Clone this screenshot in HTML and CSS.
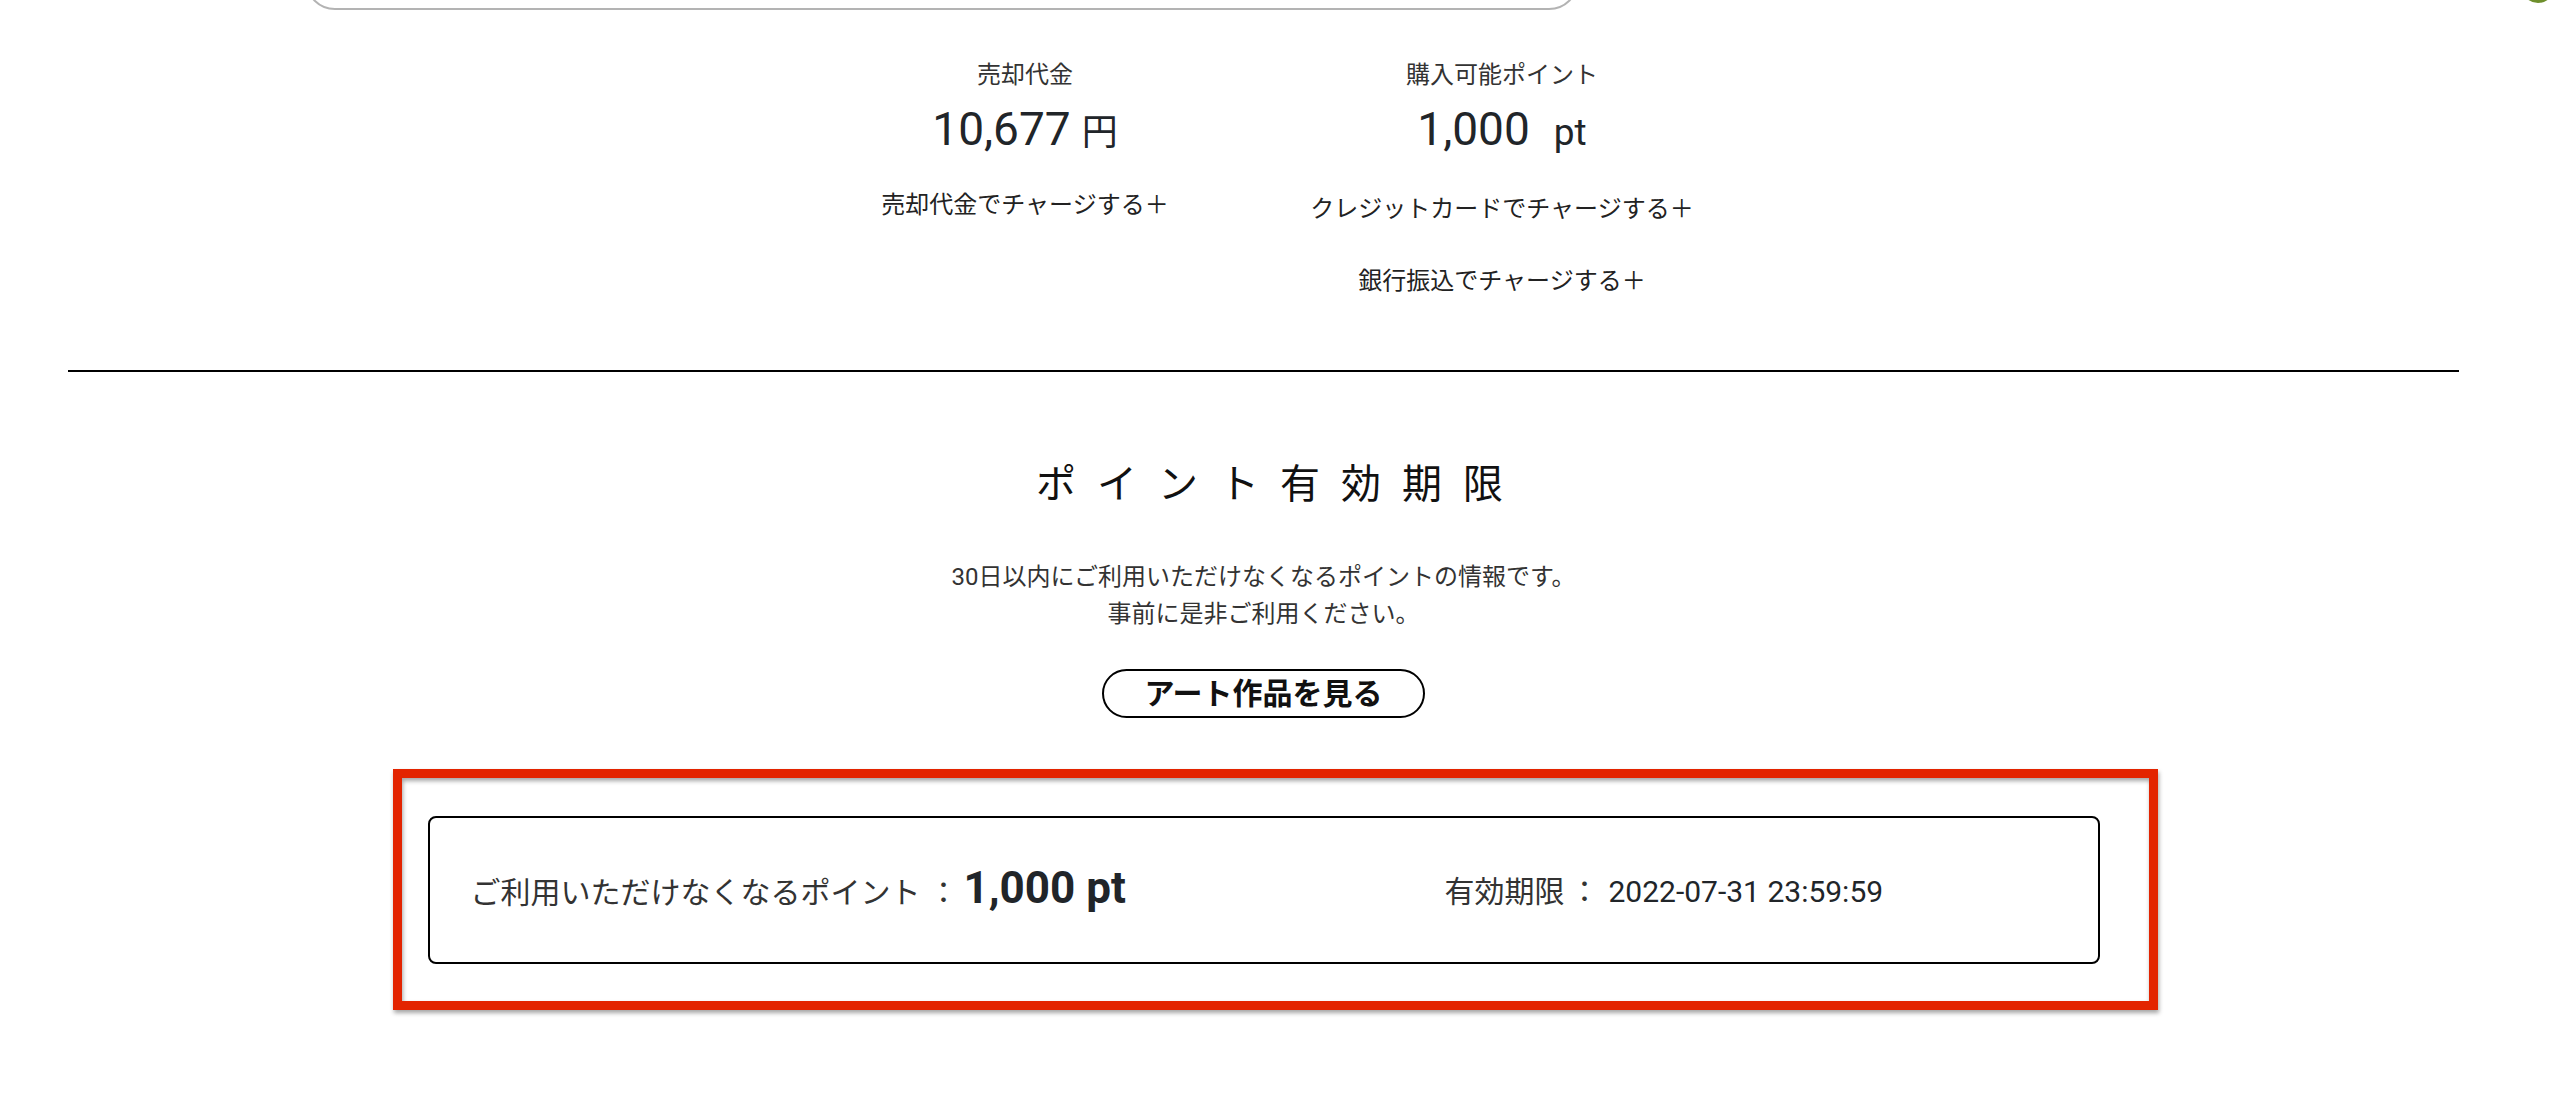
FILE: index.html
```html
<!DOCTYPE html>
<html lang="ja">
<head>
<meta charset="utf-8">
<title>ポイント有効期限</title>
<link rel="stylesheet" href="styles.css">
</head>
<body>
  <div class="avatar"></div>
  <div class="search"></div>
  <main class="page">
    <section class="balances">
      <div class="col">
        <div class="label">売却代金</div>
        <div class="amount">10,677<span class="yen">円</span></div>
        <a class="charge">売却代金でチャージする＋</a>
      </div>
      <div class="col">
        <div class="label">購入可能ポイント</div>
        <div class="amount">1,000<span class="pt">pt</span></div>
        <a class="charge">クレジットカードでチャージする＋</a>
        <a class="charge charge-next">銀行振込でチャージする＋</a>
      </div>
    </section>
    <hr class="divider">
    <section class="expiry">
      <h2 class="title">ポイント有効期限</h2>
      <p class="desc">30日以内にご利用いただけなくなるポイントの情報です。<br>事前に是非ご利用ください。</p>
      <a class="btn">アート作品を見る</a>
      <div class="card">
        <div class="cell">
          <span class="key">ご利用いただけなくなるポイント</span><span class="colon">：</span><span class="pts">1,000 pt</span>
        </div>
        <div class="cell">
          <span class="key">有効期限</span><span class="colon colon-r">：</span><span class="date">2022-07-31 23:59:59</span>
        </div>
      </div>
    </section>
  </main>
  <div class="highlight"></div>
</body>
</html>
```
FILE: styles.css
```css
html, body {
  margin: 0;
  padding: 0;
  background: #fff;
}
body {
  font-family: Roboto, "Noto Sans CJK JP", sans-serif;
  color: #212529;
  overflow: hidden;
}
a {
  text-decoration: none;
  color: inherit;
}

.avatar {
  position: absolute;
  top: -28px;
  left: 2522px;
  width: 32px;
  height: 31px;
  border-radius: 50%;
  background: #6e8f2c;
}

.search {
  box-sizing: border-box;
  margin: -60px 0 0 305px;
  width: 1274px;
  height: 70px;
  border: 2px solid #b3b3b3;
  border-radius: 30px;
}

.page {
  margin-left: 68px;
  width: 2391px;
}

.balances {
  display: flex;
  justify-content: center;
  margin-top: 47px;
}
.col {
  width: 477px;
  display: flex;
  flex-direction: column;
  align-items: center;
  text-align: center;
}
.label {
  font-size: 24px;
  line-height: 36px;
  color: #333;
}
.amount {
  margin-top: 6px;
  font-size: 46px;
  line-height: 60px;
  color: #212529;
}
.yen {
  font-family: "Noto Sans CJK JP", sans-serif;
  font-size: 36px;
  margin-left: 11px;
}
.pt {
  font-size: 37px;
  margin-left: 24px;
}
.charge {
  display: block;
  margin-top: 28px;
  font-size: 24px;
  line-height: 36px;
  color: #222;
}
.charge-next {
  margin-top: 36px;
}

.divider {
  margin: 71px 0 0;
  border: 0;
  height: 2px;
  background: #000;
}

.expiry {
  display: flex;
  flex-direction: column;
  align-items: center;
}
.title {
  margin: 85px 0 0;
  padding-left: 33px;
  font-size: 40px;
  line-height: 56px;
  letter-spacing: 21px;
  font-weight: 400;
  color: #111;
}
.desc {
  margin: 46px 0 0;
  font-size: 24px;
  line-height: 37px;
  text-align: center;
  color: #333;
}
.btn {
  box-sizing: border-box;
  margin-top: 36px;
  width: 323px;
  height: 49px;
  border: 2px solid #000;
  border-radius: 25px;
  font-size: 30px;
  font-weight: 700;
  line-height: 45px;
  text-align: center;
  color: #111;
}

.card {
  box-sizing: border-box;
  margin-top: 98px;
  width: 1672px;
  height: 148px;
  border: 2px solid #000;
  border-radius: 8px;
  padding: 0 41px;
  display: grid;
  grid-template-columns: 974px 1fr;
  align-items: center;
}
.cell {
  display: flex;
  align-items: baseline;
  line-height: 48px;
}
.key {
  font-size: 30px;
  color: #333;
}
.colon {
  font-family: "Noto Sans CJK JP", sans-serif;
  font-size: 30px;
  color: #333;
  margin-left: 8px;
}
.colon-r {
  margin-left: 5px;
}
.pts {
  margin-left: 5px;
  font-size: 44px;
  font-weight: 700;
  color: #212529;
}
.date {
  margin-left: 9px;
  font-size: 30px;
  color: #212529;
}

.highlight {
  position: absolute;
  left: 393px;
  top: 769px;
  width: 1765px;
  height: 241px;
  box-sizing: border-box;
  border: 9px solid #e32400;
  filter: drop-shadow(1px 3px 2px rgba(0, 0, 0, 0.35));
  pointer-events: none;
}
```
